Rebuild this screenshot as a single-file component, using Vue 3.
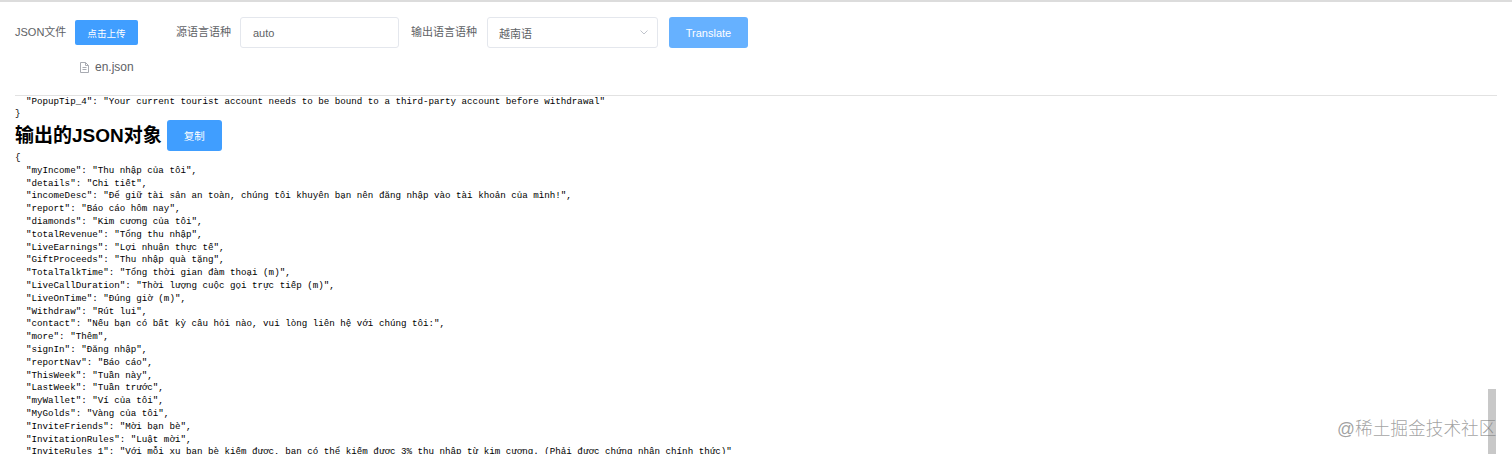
<script setup>
const inputText = `  "PopupTip_4": "Your current tourist account needs to be bound to a third-party account before withdrawal"
}`

const outputText = `{
  "myIncome": "Thu nhập của tôi",
  "details": "Chi tiết",
  "incomeDesc": "Để giữ tài sản an toàn, chúng tôi khuyên bạn nên đăng nhập vào tài khoản của mình!",
  "report": "Báo cáo hôm nay",
  "diamonds": "Kim cương của tôi",
  "totalRevenue": "Tổng thu nhập",
  "LiveEarnings": "Lợi nhuận thực tế",
  "GiftProceeds": "Thu nhập quà tặng",
  "TotalTalkTime": "Tổng thời gian đàm thoại (m)",
  "LiveCallDuration": "Thời lượng cuộc gọi trực tiếp (m)",
  "LiveOnTime": "Đúng giờ (m)",
  "Withdraw": "Rút lui",
  "contact": "Nếu bạn có bất kỳ câu hỏi nào, vui lòng liên hệ với chúng tôi:",
  "more": "Thêm",
  "signIn": "Đăng nhập",
  "reportNav": "Báo cáo",
  "ThisWeek": "Tuần này",
  "LastWeek": "Tuần trước",
  "myWallet": "Ví của tôi",
  "MyGolds": "Vàng của tôi",
  "InviteFriends": "Mời bạn bè",
  "InvitationRules": "Luật mời",
  "InviteRules_1": "Với mỗi xu bạn bè kiếm được, bạn có thể kiếm được 3% thu nhập từ kim cương. (Phải được chứng nhận chính thức)"`
</script>

<template>
  <div class="page">
    <form class="toolbar" @submit.prevent>
      <div class="upload-field">
        <div class="upload-row">
          <span class="label label-json">JSON文件</span>
          <button class="btn btn-upload" type="button">点击上传</button>
        </div>
        <div class="file-row">
          <svg class="file-icon" width="9" height="11" viewBox="0 0 9 11" fill="none" stroke="#a8abb2" stroke-width="1">
            <path d="M1 .5h4.5L8.5 3.5v7H.5v-10z" />
            <path d="M5.5 .5v3h3M2.5 5.5h4M2.5 7.5h4" />
          </svg>
          <span class="file-name">en.json</span>
        </div>
      </div>
      <span class="label label-source">源语言语种</span>
      <div class="control control-source">auto</div>
      <span class="label label-output">输出语言语种</span>
      <div class="control control-select">
        <span>越南语</span>
        <svg width="8" height="5" viewBox="0 0 8 5" fill="none" stroke="#c0c4cc" stroke-width="1">
          <path d="M.5 .5 4 4 7.5 .5" />
        </svg>
      </div>
      <button class="btn btn-translate" type="button">Translate</button>
    </form>

    <div class="content">
      <pre class="json json-input">{{ inputText }}</pre>
      <div class="heading-row">
        <h2 class="heading">输出的JSON对象</h2>
        <button class="btn btn-copy" type="button">复制</button>
      </div>
      <pre class="json json-output">{{ outputText }}</pre>
    </div>

    <div class="scroll-thumb"></div>
    <div class="watermark">@稀土掘金技术社区</div>
  </div>
</template>

<style scoped>
.page {
  position: relative;
  box-sizing: border-box;
  width: 1512px;
  height: 454px;
  overflow: hidden;
  background: #fff;
  border-top: 2px solid #dcdcdc;
  font-family: "Liberation Sans", "Noto Sans CJK SC", sans-serif;
}

.toolbar {
  box-sizing: border-box;
  display: flex;
  align-items: flex-start;
  height: 94px;
  margin: 0 15px;
  padding-top: 15px;
  border-bottom: 1px solid #e2e2e2;
}

.upload-field {
  display: flex;
  flex-direction: column;
  width: 161px;
}

.upload-row {
  display: flex;
  align-items: center;
  height: 31px;
}

.label {
  font-size: 11px;
  line-height: 31px;
  color: #606266;
  white-space: nowrap;
}

.label-json {
  width: 60px;
}

.label-source {
  width: 64px;
}

.label-output {
  width: 76px;
  margin-left: 12px;
}

.btn {
  padding: 0;
  border: 0;
  border-radius: 2px;
  color: #fff;
  font-family: inherit;
  background: #409eff;
}

.btn-upload {
  width: 63px;
  height: 25px;
  font-size: 9.6px;
}

.file-row {
  display: flex;
  align-items: center;
  gap: 6px;
  height: 20px;
  margin: 9px 0 0 65px;
  font-size: 12px;
  color: #606266;
}

.control {
  box-sizing: border-box;
  display: flex;
  align-items: center;
  height: 31px;
  border: 1px solid #e4e7ed;
  border-radius: 3px;
  font-size: 11px;
  color: #606266;
}

.control-source {
  width: 159px;
  padding-left: 12px;
}

.control-select {
  justify-content: space-between;
  width: 171px;
  padding: 0 9px 0 11px;
}

.btn-translate {
  width: 79px;
  height: 31px;
  margin-left: 11px;
  border-radius: 3px;
  font-size: 11px;
  background: #66b1ff;
}

.content {
  margin: 0 15px;
}

.json {
  margin: 0;
  font-family: "Liberation Mono", "DejaVu Sans Mono", monospace;
  font-size: 9.2px;
  color: #000;
  white-space: pre;
}

.json-input {
  height: 24px;
  line-height: 12px;
}

.json-output {
  padding-top: 1px;
  line-height: 12.8px;
}

.heading-row {
  display: flex;
  align-items: center;
  gap: 5px;
  height: 31px;
}

.heading {
  margin: 0 0 5px;
  font-size: 19px;
  font-weight: 700;
  color: #000;
  white-space: nowrap;
}

.btn-copy {
  width: 55px;
  height: 31px;
  border-radius: 3px;
  font-size: 10.5px;
}

.scroll-thumb {
  position: absolute;
  top: 387px;
  left: 1488px;
  width: 8px;
  height: 65px;
  background: #c8c8c8;
}

.watermark {
  position: absolute;
  top: 416px;
  left: 1337px;
  font-size: 17.7px;
  line-height: 22px;
  font-weight: 300;
  color: rgba(120, 120, 120, 0.7);
  white-space: nowrap;
}
</style>

<style>
html, body {
  margin: 0;
  overflow: hidden;
}
</style>
